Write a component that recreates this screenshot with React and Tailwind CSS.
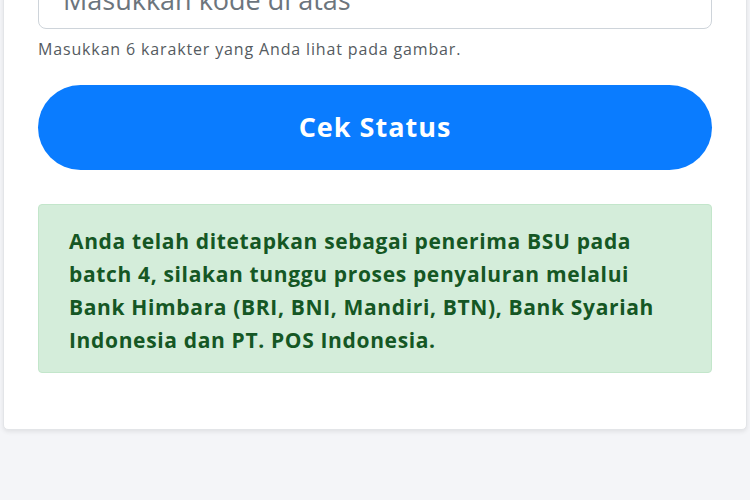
import React from 'react';

const App = () => {
  return (
    <div className="min-h-screen bg-[#f4f5f8] overflow-hidden" style={{ fontFamily: '"Open Sans", "Noto Sans", sans-serif' }}>
      <div className="mx-[3px] -mt-[40px] bg-white border border-[#e3e5e8] rounded-b-[5px] shadow-[0_2px_4px_rgba(0,0,0,0.08)] px-[34px] pb-[56px]">
        <div className="h-[68px] border border-[#ced4da] rounded-[8px] px-[24px] pt-[10px] flex items-center text-[27px] text-[#6c757d]">
          Masukkan kode di atas
        </div>
        <p className="mt-[8px] text-[16px] leading-[24px] text-[#555b61] tracking-[0.85px]">
          Masukkan 6 karakter yang Anda lihat pada gambar.
        </p>
        <button className="mt-[24px] w-full h-[85px] rounded-full bg-[#0a7cff] text-white text-[27px] font-bold tracking-[1px]">
          Cek Status
        </button>
        <div className="mt-[34px] bg-[#d4edda] border border-[#c3e6cb] rounded-[4px] pl-[30px] pr-[20px] pt-[20px] pb-[15px]">
          <p className="text-[21px] leading-[33px] font-bold text-[#155724] tracking-[0.65px]">
            Anda telah ditetapkan sebagai penerima BSU pada batch 4, silakan tunggu proses penyaluran melalui Bank Himbara (BRI, BNI, Mandiri, BTN), Bank Syariah Indonesia dan PT. POS Indonesia.
          </p>
        </div>
      </div>
    </div>
  );
};

export default App;
